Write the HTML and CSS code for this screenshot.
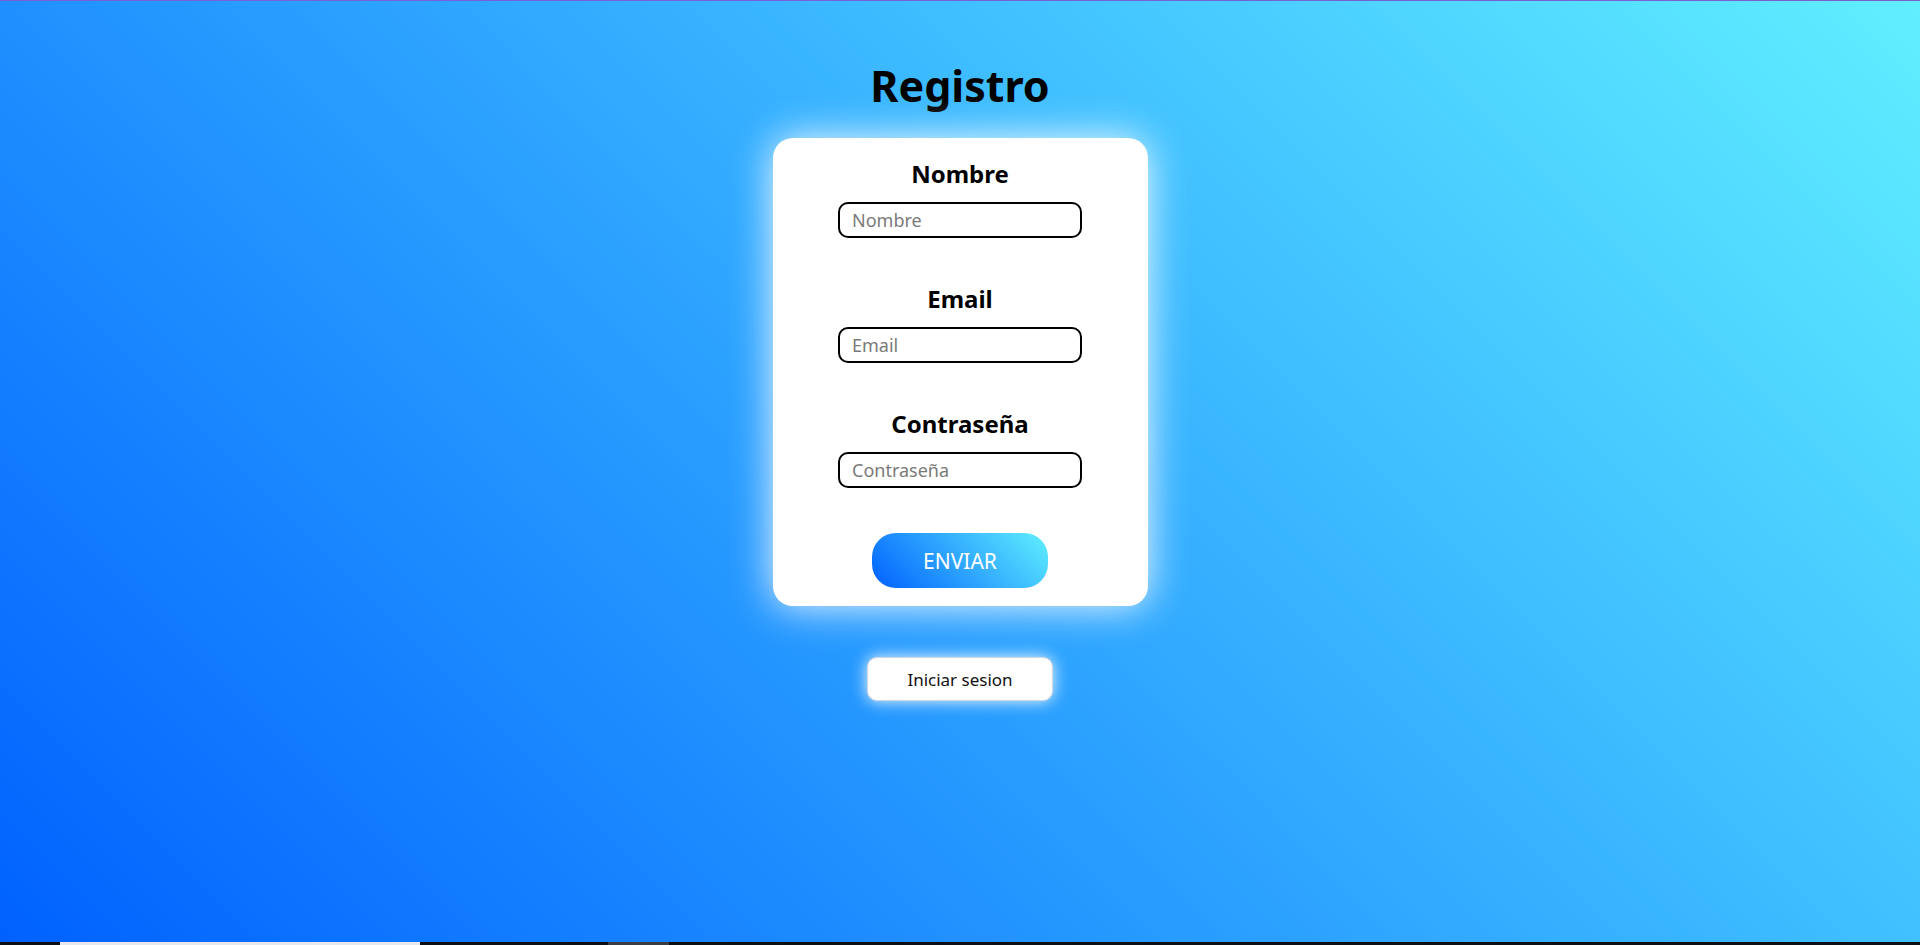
FILE: index.html
```html
<!DOCTYPE html>
<html lang="es">
<head>
<meta charset="utf-8">
<title>Registro</title>
<link rel="stylesheet" href="styles.css">
</head>
<body>
<div class="page">
  <main class="main">
    <h1 class="title">Registro</h1>
    <form class="card">
      <div class="field">
        <label class="label" for="nombre">Nombre</label>
        <input class="input" id="nombre" type="text" placeholder="Nombre">
      </div>
      <div class="field">
        <label class="label" for="email">Email</label>
        <input class="input" id="email" type="email" placeholder="Email">
      </div>
      <div class="field">
        <label class="label" for="pass">Contraseña</label>
        <input class="input" id="pass" type="password" placeholder="Contraseña">
      </div>
      <button class="send" type="button">ENVIAR</button>
    </form>
    <button class="login" type="button">Iniciar sesion</button>
  </main>
  <div class="bottombar">
    <span class="seg seg-gap1"></span>
    <span class="seg seg-light"></span>
    <span class="seg seg-gap2"></span>
    <span class="seg seg-gray"></span>
  </div>
</div>
</body>
</html>
```

FILE: styles.css
```css
html, body {
  margin: 0;
  padding: 0;
}
body {
  font-family: "Noto Sans", "Open Sans", sans-serif;
  color: #000;
  overflow: hidden;
}
.page {
  height: 945px;
  display: flex;
  flex-direction: column;
  background: linear-gradient(45deg, #0061ff, #60efff);
  border-top: 1px solid #7a5fd6;
  box-sizing: border-box;
}
.main {
  flex: 1;
  display: flex;
  flex-direction: column;
  align-items: center;
}
.title {
  margin: 0;
  padding-top: 57px;
  font-size: 43px;
  line-height: 56px;
  font-weight: 700;
}
.card {
  margin-top: 24px;
  width: 375px;
  height: 468px;
  box-sizing: border-box;
  padding: 20px 0 18px;
  background: #fff;
  border-radius: 20px;
  box-shadow: 0 0 40px rgba(255, 255, 255, 0.95);
  display: flex;
  flex-direction: column;
  align-items: center;
}
.field {
  display: flex;
  flex-direction: column;
  align-items: center;
  margin-bottom: 45px;
}
.label {
  font-size: 24px;
  line-height: 32px;
  font-weight: 700;
  margin-bottom: 12px;
}
.input {
  width: 244px;
  height: 36px;
  box-sizing: border-box;
  border: 2px solid #000;
  border-radius: 10px;
  padding: 0 12px;
  font-family: inherit;
  font-size: 18px;
  outline: none;
}
.input::placeholder {
  color: #7a7a7a;
}
.send {
  width: 176px;
  height: 55px;
  border: none;
  border-radius: 24px;
  background: linear-gradient(45deg, #0061ff, #60efff);
  color: #fff;
  font-family: inherit;
  font-size: 21px;
  cursor: pointer;
}
.login {
  margin-top: 51px;
  width: 186px;
  height: 44px;
  border: 1px solid #cfd6dd;
  border-radius: 10px;
  background: #fff;
  color: #111;
  font-family: inherit;
  font-size: 17px;
  box-shadow: 0 0 16px rgba(255, 255, 255, 0.95);
  cursor: pointer;
}
.bottombar {
  height: 3px;
  background: #0d0f14;
  display: flex;
}
.seg { display: block; height: 100%; }
.seg-gap1 { width: 60px; }
.seg-light { width: 360px; background: #e6e8ec; }
.seg-gap2 { width: 188px; }
.seg-gray { width: 61px; background: #3a3d44; }
```
